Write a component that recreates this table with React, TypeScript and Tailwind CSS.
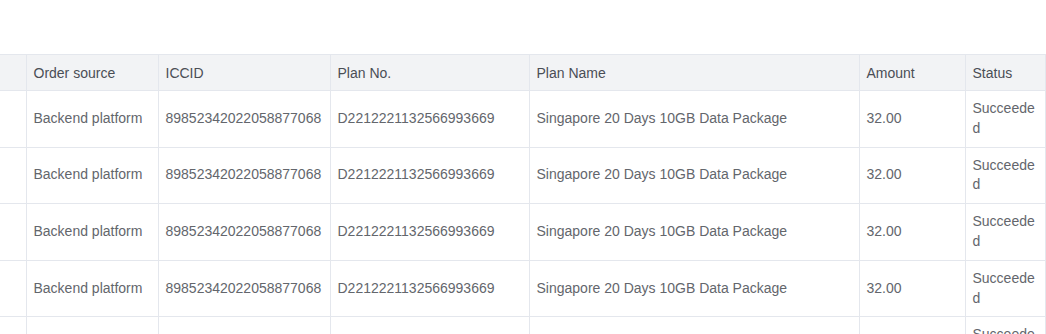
const columns = [
  { key: "sel", label: "", width: 26 },
  { key: "source", label: "Order source", width: 132 },
  { key: "iccid", label: "ICCID", width: 172 },
  { key: "planNo", label: "Plan No.", width: 199 },
  { key: "planName", label: "Plan Name", width: 330 },
  { key: "amount", label: "Amount", width: 106 },
  { key: "status", label: "Status", width: 80 },
]

const row = {
  sel: "",
  source: "Backend platform",
  iccid: "89852342022058877068",
  planNo: "D2212221132566993669",
  planName: "Singapore 20 Days 10GB Data Package",
  amount: "32.00",
  status: "Succeeded",
}

const rows = Array.from({ length: 5 }, () => row)

export default function App() {
  return (
    <div className="w-[1046px] h-[334px] overflow-hidden bg-white pt-[54px] font-['Liberation_Sans','Noto_Sans',sans-serif] text-[14px]">
      <table className="table-fixed border-collapse w-[1045px]">
        <colgroup>
          {columns.map((c) => (
            <col key={c.key} style={{ width: c.width }} />
          ))}
        </colgroup>
        <thead>
          <tr className="bg-[#f2f3f5] h-[36px]">
            {columns.map((c, i) => (
              <th
                key={c.key}
                className={
                  "border border-[#e4e7ed] px-[7px] py-0 text-left align-middle font-medium text-[#4a4e55] leading-[18px] " +
                  (i === 0 ? "border-l-0" : "")
                }
              >
                {c.label}
              </th>
            ))}
          </tr>
        </thead>
        <tbody>
          {rows.map((r, ri) => (
            <tr key={ri}>
              {columns.map((c, i) => (
                <td
                  key={c.key}
                  className={
                    "border border-[#e4e7ed] px-[7px] py-[8px] align-middle text-[#63666c] leading-[19.8px] break-words " +
                    (i === 0 ? "border-l-0" : "")
                  }
                >
                  {r[c.key as keyof typeof r]}
                </td>
              ))}
            </tr>
          ))}
        </tbody>
      </table>
    </div>
  )
}
